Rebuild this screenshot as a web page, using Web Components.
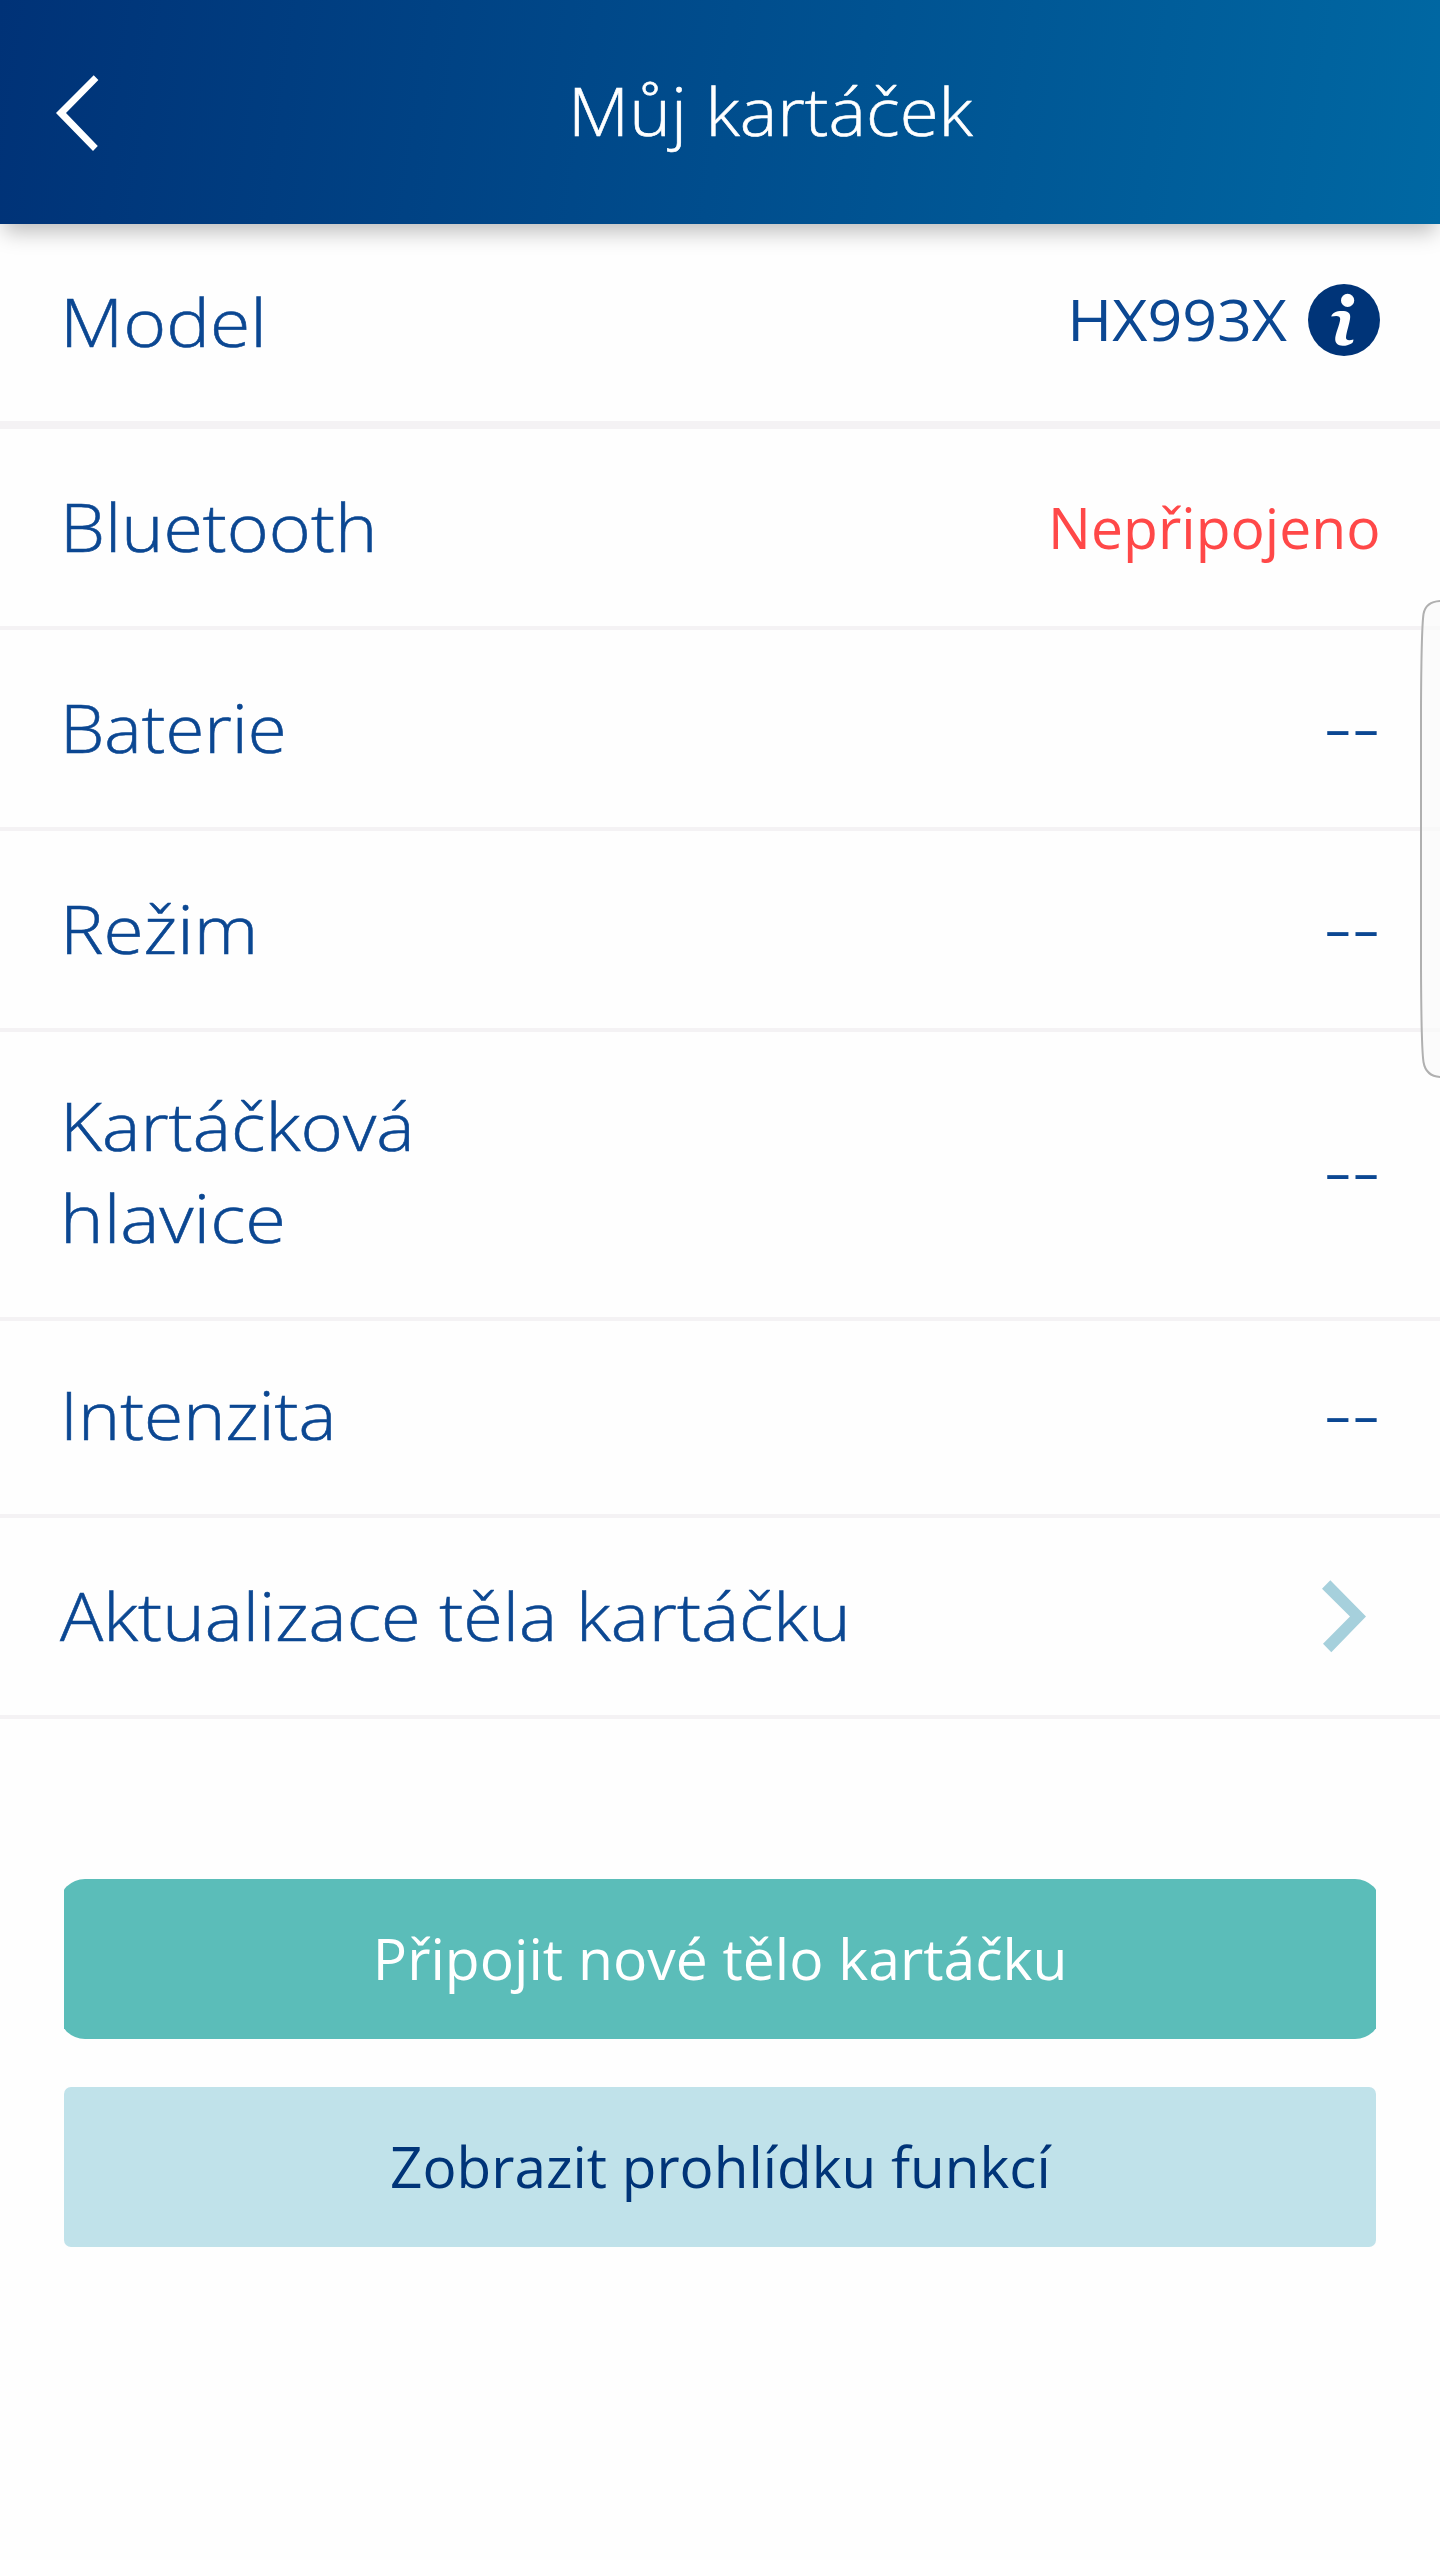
<!DOCTYPE html>
<html lang="cs">
<head>
<meta charset="utf-8">
<title>Můj kartáček</title>
<style>
	html, body {
		margin: 0;
		height: 100%;
		background: #fefefe;
		font-family: 'Open Sans', 'Noto Sans', sans-serif;
	}
</style>
</head>
<body>

<brush-screen>
	<app-header slot="header"><stretch-text ratio="1.057" from="center">Můj kartáček</stretch-text></app-header>

	<detail-row thick>
		<stretch-text ratio="1.095">Model</stretch-text>
		<detail-value slot="value" kind="model"><stretch-text ratio="1.0875" from="right">HX993X</stretch-text></detail-value>
		<info-icon slot="value"></info-icon>
	</detail-row>
	<detail-row>
		<stretch-text ratio="1.07">Bluetooth</stretch-text>
		<detail-value slot="value" kind="alert"><stretch-text ratio="1.018" from="right">Nepřipojeno</stretch-text></detail-value>
	</detail-row>
	<detail-row>
		<stretch-text ratio="1.055">Baterie</stretch-text>
		<detail-value slot="value" kind="empty"><stretch-text ratio="1.04" from="right">--</stretch-text></detail-value>
	</detail-row>
	<detail-row>
		<stretch-text ratio="1.09">Režim</stretch-text>
		<detail-value slot="value" kind="empty"><stretch-text ratio="1.04" from="right">--</stretch-text></detail-value>
	</detail-row>
	<detail-row size="tall">
		<stretch-text ratio="1.08">Kartáčková</stretch-text>
		<stretch-text ratio="1.103">hlavice</stretch-text>
		<detail-value slot="value" kind="empty"><stretch-text ratio="1.04" from="right">--</stretch-text></detail-value>
	</detail-row>
	<detail-row size="short">
		<stretch-text ratio="1.066">Intenzita</stretch-text>
		<detail-value slot="value" kind="empty"><stretch-text ratio="1.04" from="right">--</stretch-text></detail-value>
	</detail-row>
	<detail-row>
		<stretch-text ratio="1.0745">Aktualizace těla kartáčku</stretch-text>
		<chevron-icon slot="value"></chevron-icon>
	</detail-row>

	<action-button slot="actions" kind="primary"><stretch-text ratio="1.018" from="center">Připojit nové tělo kartáčku</stretch-text></action-button>
	<action-button slot="actions" kind="secondary"><stretch-text ratio="1.012" from="center">Zobrazit prohlídku funkcí</stretch-text></action-button>

	<edge-handle slot="overlay"></edge-handle>
</brush-screen>

<script>
const render = (el, html) => {
	el.attachShadow({ mode: 'open' }).innerHTML = html;
};

class BrushScreen extends HTMLElement {
	constructor() {
		super();
		render(this, `
			<style>
				:host {
					display: flex;
					flex-direction: column;
					position: relative;
					width: 1440px;
					height: 2560px;
					overflow: hidden;
				}
				.actions {
					display: flex;
					flex-direction: column;
					gap: 48px;
					padding: 160px 64px 0;
				}
			</style>
			<slot name="header"></slot>
			<main><slot></slot></main>
			<div class="actions"><slot name="actions"></slot></div>
			<slot name="overlay"></slot>
		`);
	}
}

class AppHeader extends HTMLElement {
	constructor() {
		super();
		render(this, `
			<style>
				:host {
					display: flex;
					align-items: center;
					flex: none;
					height: 224px;
					z-index: 1;
					color: #fff;
					background: linear-gradient(98deg, #003277, #0068a3);
					box-shadow: 0 12px 20px -4px rgba(0, 0, 0, 0.26);
				}
				svg {
					flex: none;
					width: 104px;
					height: 224px;
				}
				.title {
					flex: 1;
					margin: 0 3px 4px 0;
					text-align: center;
					font-size: 67px;
					font-weight: 300;
					line-height: 92px;
					-webkit-text-stroke: 0.6px currentColor;
				}
			</style>
			<svg viewBox="0 0 104 224" fill="#fff">
				<path d="M93.7 75.3 L98.4 80 L66 113 L97.8 146 L93 150.9 L56 113 Z"/>
			</svg>
			<div class="title"><slot></slot></div>
		`);
	}
}

class DetailRow extends HTMLElement {
	constructor() {
		super();
		render(this, `
			<style>
				:host {
					display: flex;
					align-items: center;
					justify-content: space-between;
					box-sizing: border-box;
					height: 201px;
					padding: 0 60px;
					border-bottom: 4px solid #f4f2f4;
					color: #0b4792;
				}
				:host([thick]) {
					height: 205px;
					border-bottom-width: 8px;
				}
				:host([size=tall]) {
					height: 289px;
					padding-bottom: 4px;
				}
				:host([size=short]) {
					height: 197px;
					padding-bottom: 4px;
				}
				.label {
					margin-bottom: 3px;
					font-size: 67px;
					font-weight: 300;
					line-height: 92px;
					white-space: nowrap;
					-webkit-text-stroke: 0.6px currentColor;
				}
				:host([size=tall]) .label {
					width: 360px;
					white-space: normal;
				}
				.value {
					display: flex;
					align-items: center;
					gap: 21px;
				}
			</style>
			<div class="label"><slot></slot></div>
			<div class="value"><slot name="value"></slot></div>
		`);
	}
}

class DetailValue extends HTMLElement {
	constructor() {
		super();
		render(this, `
			<style>
				:host {
					display: block;
					font-size: 56px;
					line-height: 76px;
				}
				:host([kind=model]) {
					margin-bottom: 8px;
				}
				:host([kind=alert]) {
					margin-bottom: 2px;
					color: #ff4848;
				}
				:host([kind=empty]) {
					margin-bottom: 9px;
					font-size: 84px;
					font-weight: 300;
				}
			</style>
			<slot></slot>
		`);
	}
}

// Widens its text horizontally without touching the line height
class StretchText extends HTMLElement {
	constructor() {
		super();
		render(this, `
			<style>
				:host {
					display: inline-block;
					transform-origin: left;
				}
				:host([from=right]) {
					transform-origin: right;
				}
				:host([from=center]) {
					transform-origin: center;
				}
			</style>
			<slot></slot>
		`);
	}

	connectedCallback() {
		this.style.transform = `scaleX(${this.getAttribute('ratio') || 1})`;
	}
}

class InfoIcon extends HTMLElement {
	constructor() {
		super();
		render(this, `
			<style>
				:host {
					display: block;
					width: 72px;
					height: 72px;
					margin-bottom: 5px;
				}
				svg {
					display: block;
				}
			</style>
			<svg width="72" height="72" viewBox="0 0 72 72">
				<circle cx="36" cy="36" r="36" fill="#003478"/>
				<circle cx="39.6" cy="16.4" r="6.6" fill="#fff"/>
				<path fill="#fff" d="M23.3 32.6 C24 29 28 27 34 27 C39.5 27 42.4 28.8 42.2 33 C42 38 38.2 49 38 53.5 C37.9 56.5 41 56.8 45.4 55.5 C45.4 57.5 45 58.8 43 59.8 C40.5 61.2 37.5 61.9 34.6 61.8 C30 61.6 27.3 59.2 27.2 55.3 C27.1 50 31.9 40.5 32.2 35 C32.3 31.8 29 31.2 23.3 32.6 Z"/>
			</svg>
		`);
	}
}

class ChevronIcon extends HTMLElement {
	constructor() {
		super();
		render(this, `
			<style>
				:host {
					display: block;
					width: 58px;
					height: 74px;
				}
				svg {
					display: block;
				}
			</style>
			<svg width="58" height="74" viewBox="0 0 58 74" fill="#a6d0dc">
				<path d="M8.3 .3 L0 8.8 L28 36.4 L1 63.8 L9.3 72.3 L44 36.4 Z"/>
			</svg>
		`);
	}
}

class ActionButton extends HTMLElement {
	constructor() {
		super();
		render(this, `
			<style>
				:host {
					display: flex;
					align-items: center;
					justify-content: center;
					position: relative;
					z-index: 0;
					box-sizing: border-box;
					height: 160px;
					padding-bottom: 3px;
					overflow: hidden;
					font-size: 56px;
					line-height: 76px;
				}
				:host([kind=primary]) {
					color: #fff;
				}
				/* the rounded plate runs past both sides and gets cut off */
				:host([kind=primary])::before {
					content: '';
					position: absolute;
					inset: 0 -5px;
					z-index: -1;
					border-radius: 26px;
					background: #5bbdb9;
				}
				:host([kind=secondary]) {
					border-radius: 7px;
					color: #003478;
					background: #c0e2ea;
				}
			</style>
			<slot></slot>
		`);
	}
}

class EdgeHandle extends HTMLElement {
	constructor() {
		super();
		render(this, `
			<style>
				:host {
					display: block;
					position: absolute;
					top: 600px;
					right: 0;
					width: 20px;
					height: 478px;
				}
				svg {
					display: block;
				}
			</style>
			<svg width="20" height="478" viewBox="0 0 20 478">
				<path fill="#fafafa" fill-opacity=".75" stroke="#b0b0b0" stroke-width="2"
					d="M22 1 C10 1 5 6 3.5 14 C1.6 28 1.2 60 1 110 V368 C1.2 418 1.6 450 3.5 462 C5 471 10 477 22 477"/>
			</svg>
		`);
	}
}

customElements.define('brush-screen', BrushScreen);
customElements.define('app-header', AppHeader);
customElements.define('detail-row', DetailRow);
customElements.define('detail-value', DetailValue);
customElements.define('stretch-text', StretchText);
customElements.define('info-icon', InfoIcon);
customElements.define('chevron-icon', ChevronIcon);
customElements.define('action-button', ActionButton);
customElements.define('edge-handle', EdgeHandle);
</script>
</body>
</html>
